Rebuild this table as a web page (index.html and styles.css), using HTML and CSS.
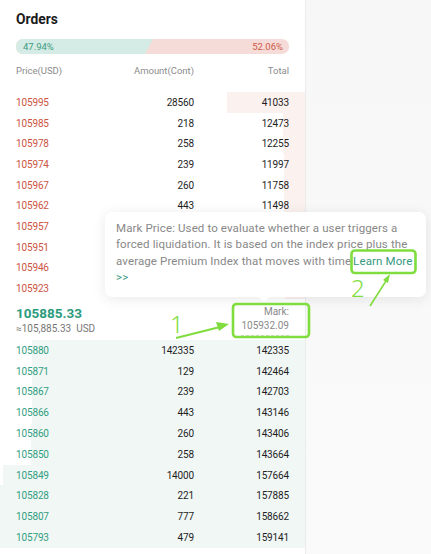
FILE: index.html
```html
<!DOCTYPE html>
<html>
<head>
<meta charset="utf-8">
<link rel="stylesheet" href="styles.css">
</head>
<body>
<div class="page">
  <div class="panel">
    <div class="title">Orders</div>
    <div class="ratio">
      <div class="ratio-buy"></div>
      <span class="ratio-txt buy">47.94%</span>
      <span class="ratio-txt sell">52.06%</span>
    </div>
    <div class="head">
      <span>Price(USD)</span><span class="r">Amount(Cont)</span><span class="r">Total</span>
    </div>
    <div class="book sells">
      <div class="row"><span class="depth" style="width:78px"></span><span class="p">105995</span><span class="r">28560</span><span class="r">41033</span></div>
      <div class="row"><span class="depth" style="width:22px"></span><span class="p">105985</span><span class="r">218</span><span class="r">12473</span></div>
      <div class="row"><span class="depth" style="width:22px"></span><span class="p">105978</span><span class="r">258</span><span class="r">12255</span></div>
      <div class="row"><span class="depth" style="width:21px"></span><span class="p">105974</span><span class="r">239</span><span class="r">11997</span></div>
      <div class="row"><span class="depth" style="width:21px"></span><span class="p">105967</span><span class="r">260</span><span class="r">11758</span></div>
      <div class="row"><span class="depth" style="width:21px"></span><span class="p">105962</span><span class="r">443</span><span class="r">11498</span></div>
      <div class="row"><span class="depth" style="width:20px"></span><span class="p">105957</span><span class="r">239</span><span class="r">11055</span></div>
      <div class="row"><span class="depth" style="width:20px"></span><span class="p">105951</span><span class="r">260</span><span class="r">10816</span></div>
      <div class="row"><span class="depth" style="width:20px"></span><span class="p">105946</span><span class="r">258</span><span class="r">10556</span></div>
      <div class="row"><span class="depth" style="width:20px"></span><span class="p">105923</span><span class="r">218</span><span class="r">10298</span></div>
    </div>
    <div class="mid">
      <div class="mid-left">
        <div class="last">105885.33</div>
        <div class="approx">≈105,885.33&nbsp;&nbsp;USD</div>
      </div>
      <div class="mark">
        <div>Mark:</div>
        <div class="mark-val">105932.09</div>
      </div>
    </div>
    <div class="book buys">
      <div class="row"><span class="depth" style="width:273px"></span><span class="p">105880</span><span class="r">142335</span><span class="r">142335</span></div>
      <div class="row"><span class="depth" style="width:273px"></span><span class="p">105871</span><span class="r">129</span><span class="r">142464</span></div>
      <div class="row"><span class="depth" style="width:273px"></span><span class="p">105867</span><span class="r">239</span><span class="r">142703</span></div>
      <div class="row"><span class="depth" style="width:273px"></span><span class="p">105866</span><span class="r">443</span><span class="r">143146</span></div>
      <div class="row"><span class="depth" style="width:274px"></span><span class="p">105860</span><span class="r">260</span><span class="r">143406</span></div>
      <div class="row"><span class="depth" style="width:274px"></span><span class="p">105850</span><span class="r">258</span><span class="r">143664</span></div>
      <div class="row"><span class="depth" style="width:302px"></span><span class="p">105849</span><span class="r">14000</span><span class="r">157664</span></div>
      <div class="row"><span class="depth" style="width:305px"></span><span class="p">105828</span><span class="r">221</span><span class="r">157885</span></div>
      <div class="row"><span class="depth" style="width:305px"></span><span class="p">105807</span><span class="r">777</span><span class="r">158662</span></div>
      <div class="row"><span class="depth" style="width:305px"></span><span class="p">105793</span><span class="r">479</span><span class="r">159141</span></div>
    </div>
  </div>
  <div class="side"></div>

  <div class="tooltip">Mark Price: Used to evaluate whether a user triggers a<br>forced liquidation. It is based on the index price plus the<br>average Premium Index that moves with time<span class="link gap">Learn More</span><br><span class="link">&gt;&gt;</span></div>

  <svg class="annot" width="431" height="554" viewBox="0 0 431 554">
    <rect x="233" y="304" width="76" height="33" rx="3.5" fill="none" stroke="#7fdd3e" stroke-width="2.6"/>
    <rect x="351.5" y="250.5" width="64" height="22.5" rx="3.5" fill="none" stroke="#7fdd3e" stroke-width="2.6"/>
    <text x="170" y="333" class="num">1</text>
    <line x1="176" y1="338" x2="220" y2="327" stroke="#7fdd3e" stroke-width="2.2"/>
    <polygon points="229,324 216,322 219,331" fill="#7fdd3e"/>
    <text x="351" y="297" class="num">2</text>
    <line x1="370" y1="306" x2="386" y2="281" stroke="#7fdd3e" stroke-width="1.6"/>
    <polygon points="390,274 383,280 388,283" fill="#7fdd3e"/>
  </svg>
</div>
</body>
</html>
```

FILE: styles.css
```css
* { box-sizing: border-box; }
html, body { margin: 0; padding: 0; }
body {
  width: 431px;
  height: 554px;
  overflow: hidden;
  font-family: Roboto, "Noto Sans", sans-serif;
  background: #f8f8f9;
}
.page {
  position: relative;
  display: flex;
  width: 431px;
  height: 554px;
}
.panel {
  width: 306px;
  height: 554px;
  background: #fff;
  border-right: 1px solid #ececec;
  padding-top: 9px;
}
.side {
  flex: 1;
  background: linear-gradient(180deg, #f7f7f8 0%, #fafafb 100%);
}
.title {
  padding: 0 16px;
  font-size: 13.8px;
  font-weight: 700;
  line-height: 20px;
  color: #1b1b1b;
}
.ratio {
  position: relative;
  margin: 10px 16px 0;
  height: 15px;
  border-radius: 7px;
  background: #f6dcd8;
  overflow: hidden;
  display: flex;
  align-items: center;
  justify-content: space-between;
  padding: 0 6px 0 7px;
}
.ratio-buy {
  position: absolute;
  left: 0; top: 0; bottom: 0;
  width: 137px;
  background: #d5ebe5;
  clip-path: polygon(0 0, 100% 0, calc(100% - 8px) 100%, 0 100%);
}
.ratio-txt {
  position: relative;
  font-size: 9.5px;
  line-height: 15px;
}
.ratio-txt.buy { color: #3c9c82; }
.ratio-txt.sell { color: #cf5846; }
.head {
  display: grid;
  grid-template-columns: 1fr 100px 95px;
  padding: 9px 16px 13px;
  font-size: 9.5px;
  line-height: 16px;
  color: #8c8c8c;
}
.r { text-align: right; }
.book .row {
  position: relative;
  display: grid;
  grid-template-columns: 1fr 100px 95px;
  align-items: center;
  padding: 0 16px;
  height: 20.7px;
  font-size: 10px;
  letter-spacing: -0.15px;
  color: #1e1e1e;
}
.book .row > span:not(.depth) { position: relative; }
.depth {
  position: absolute;
  right: 0; top: 0; bottom: 0;
}
.sells .depth { background: #fbf1ef; }
.buys .depth { background: #f1f7f5; }
.buys .row { height: 20.8px; }
.sells .p { color: #cd5443; }
.buys .p { color: #329e82; }
.mid {
  display: flex;
  justify-content: space-between;
  align-items: flex-start;
  padding: 5px 16px 4px;
  height: 41px;
}
.last {
  font-size: 13.5px;
  font-weight: 700;
  line-height: 18px;
  color: #2b9b7e;
}
.approx {
  font-size: 10px;
  line-height: 14px;
  color: #777;
}
.mark {
  text-align: right;
  font-size: 10px;
  line-height: 14px;
  color: #8a8a8a;
  padding-top: 1px;
}
.mark-val {
  border-bottom: 1px dashed #d8d8d8;
  padding-bottom: 2px;
}
.tooltip {
  position: absolute;
  left: 105px;
  top: 212px;
  width: 321px;
  height: 85px;
  background: #fff;
  border-radius: 7px;
  box-shadow: 0 2px 14px rgba(0, 0, 0, 0.09);
  padding: 8px 6px 0 11px;
  font-size: 11.5px;
  line-height: 16.3px;
  color: #888;
  white-space: nowrap;
  letter-spacing: 0.12px;
}
.tooltip::after {
  content: "";
  position: absolute;
  left: 154px;
  bottom: -5px;
  border-left: 5px solid transparent;
  border-right: 5px solid transparent;
  border-top: 5px solid #fff;
}
.link { color: #35997f; }
.link.gap { margin-left: 2px; }
.annot {
  position: absolute;
  left: 0;
  top: 0;
  pointer-events: none;
}
.num {
  font-family: "Noto Sans", sans-serif;
  font-size: 24px;
  font-weight: 300;
  fill: #7fdd3e;
}
```
